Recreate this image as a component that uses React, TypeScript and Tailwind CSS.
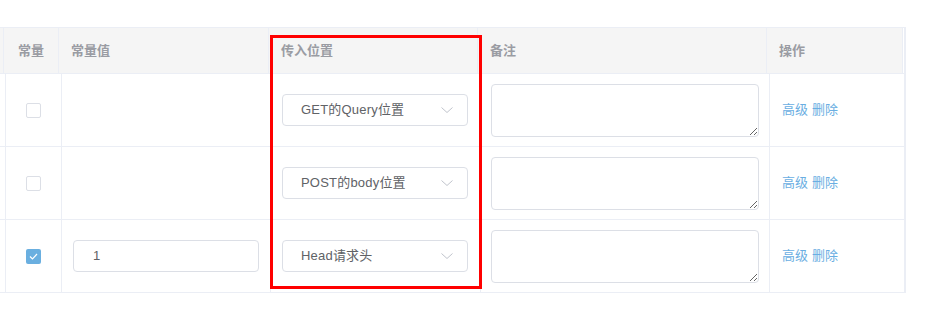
import React from "react";

const FONT = "font-['Liberation_Sans','Noto_Sans_CJK_SC',sans-serif]";

type Row = { checked: boolean; value?: string; position: string };

const rows: Row[] = [
  { checked: false, position: "GET的Query位置" },
  { checked: false, position: "POST的body位置" },
  { checked: true, value: "1", position: "Head请求头" },
];

function Checkbox({ checked }: { checked: boolean }) {
  if (checked) {
    return (
      <span className="flex h-[15px] w-[15px] items-center justify-center rounded-[2px] bg-[#6aafe0]">
        <svg width="9" height="7" viewBox="0 0 9 7" fill="none">
          <path d="M1 3.5 L3.5 6 L8 1" stroke="#fff" strokeWidth="1.2" />
        </svg>
      </span>
    );
  }
  return <span className="block h-[15px] w-[15px] rounded-[2px] border border-[#dcdfe6] bg-white" />;
}

function Select({ label }: { label: string }) {
  return (
    <div className="flex h-[32px] w-[186px] items-center justify-between rounded-[4px] border border-[#dcdfe6] bg-white pl-[18px] pr-[14px]">
      <span className="text-[13px] tracking-[0.2px] text-[#606266]">{label}</span>
      <svg width="12" height="6" viewBox="0 0 12 6" fill="none">
        <path d="M0.5 0.5 L6 5.5 L11.5 0.5" stroke="#c0c4cc" strokeWidth="1" />
      </svg>
    </div>
  );
}

export default function App() {
  return (
    <div className={`${FONT} relative h-[322px] w-[926px] bg-white pt-[27px]`}>
      <div className="w-[906px] border-t border-[#ebeef5]">
        {/* header */}
        <div className="flex h-[46px] border-b border-[#ebeef5] bg-[#f5f5f5] text-[13px] font-bold text-[#9a9ca3]">
          <div className="w-[4px] border-r border-[#ebeef5]" />
          <div className="flex w-[55px] items-center justify-center border-r border-[#ebeef5]">常量</div>
          <div className="flex w-[210px] items-center border-r border-[#ebeef5] pl-3">常量值</div>
          <div className="flex w-[209px] items-center border-r border-[#ebeef5] pl-3">传入位置</div>
          <div className="flex w-[289px] items-center border-r border-[#ebeef5] pl-3">备注</div>
          <div className="flex w-[136px] items-center border-r border-[#ebeef5] pl-3">操作</div>
          <div className="w-[1px] bg-white" />
          <div className="w-[2px] bg-[#ebeef5]" />
        </div>
        {/* body */}
        {rows.map((r, i) => (
          <div key={i} className="flex h-[73px] border-b border-[#ebeef5] text-[13px]">
            <div className="w-[6px] border-r border-[#ebeef5]" />
            <div className="flex w-[56px] items-center justify-center border-r border-[#ebeef5]">
              <Checkbox checked={r.checked} />
            </div>
            <div className="flex w-[209px] items-center border-r border-[#ebeef5] pl-[11px]">
              {r.value !== undefined && (
                <div className="flex h-[32px] w-[186px] items-center rounded-[4px] border border-[#dcdfe6] pl-[19px] text-[13px] text-[#606266]">
                  {r.value}
                </div>
              )}
            </div>
            <div className="flex w-[210px] items-center border-r border-[#ebeef5] pl-[11px]">
              <Select label={r.position} />
            </div>
            <div className="flex w-[289px] items-center border-r border-[#ebeef5] pl-[10px]">
              <textarea
                className="h-[53px] w-[268px] rounded-[4px] border border-[#dcdfe6] bg-white outline-none"
                defaultValue=""
              />
            </div>
            <div className="flex w-[134px] items-center pl-3 text-[#6aaee2]">
              <span>高级</span>
              <span className="ml-[4px]">删除</span>
            </div>
            <div className="w-[2px] bg-[#ebeef5]" />
          </div>
        ))}
      </div>
      <div className="pointer-events-none absolute left-[270px] top-[35px] h-[254px] w-[212px] border-[3px] border-[#ff0000]" />
    </div>
  );
}
